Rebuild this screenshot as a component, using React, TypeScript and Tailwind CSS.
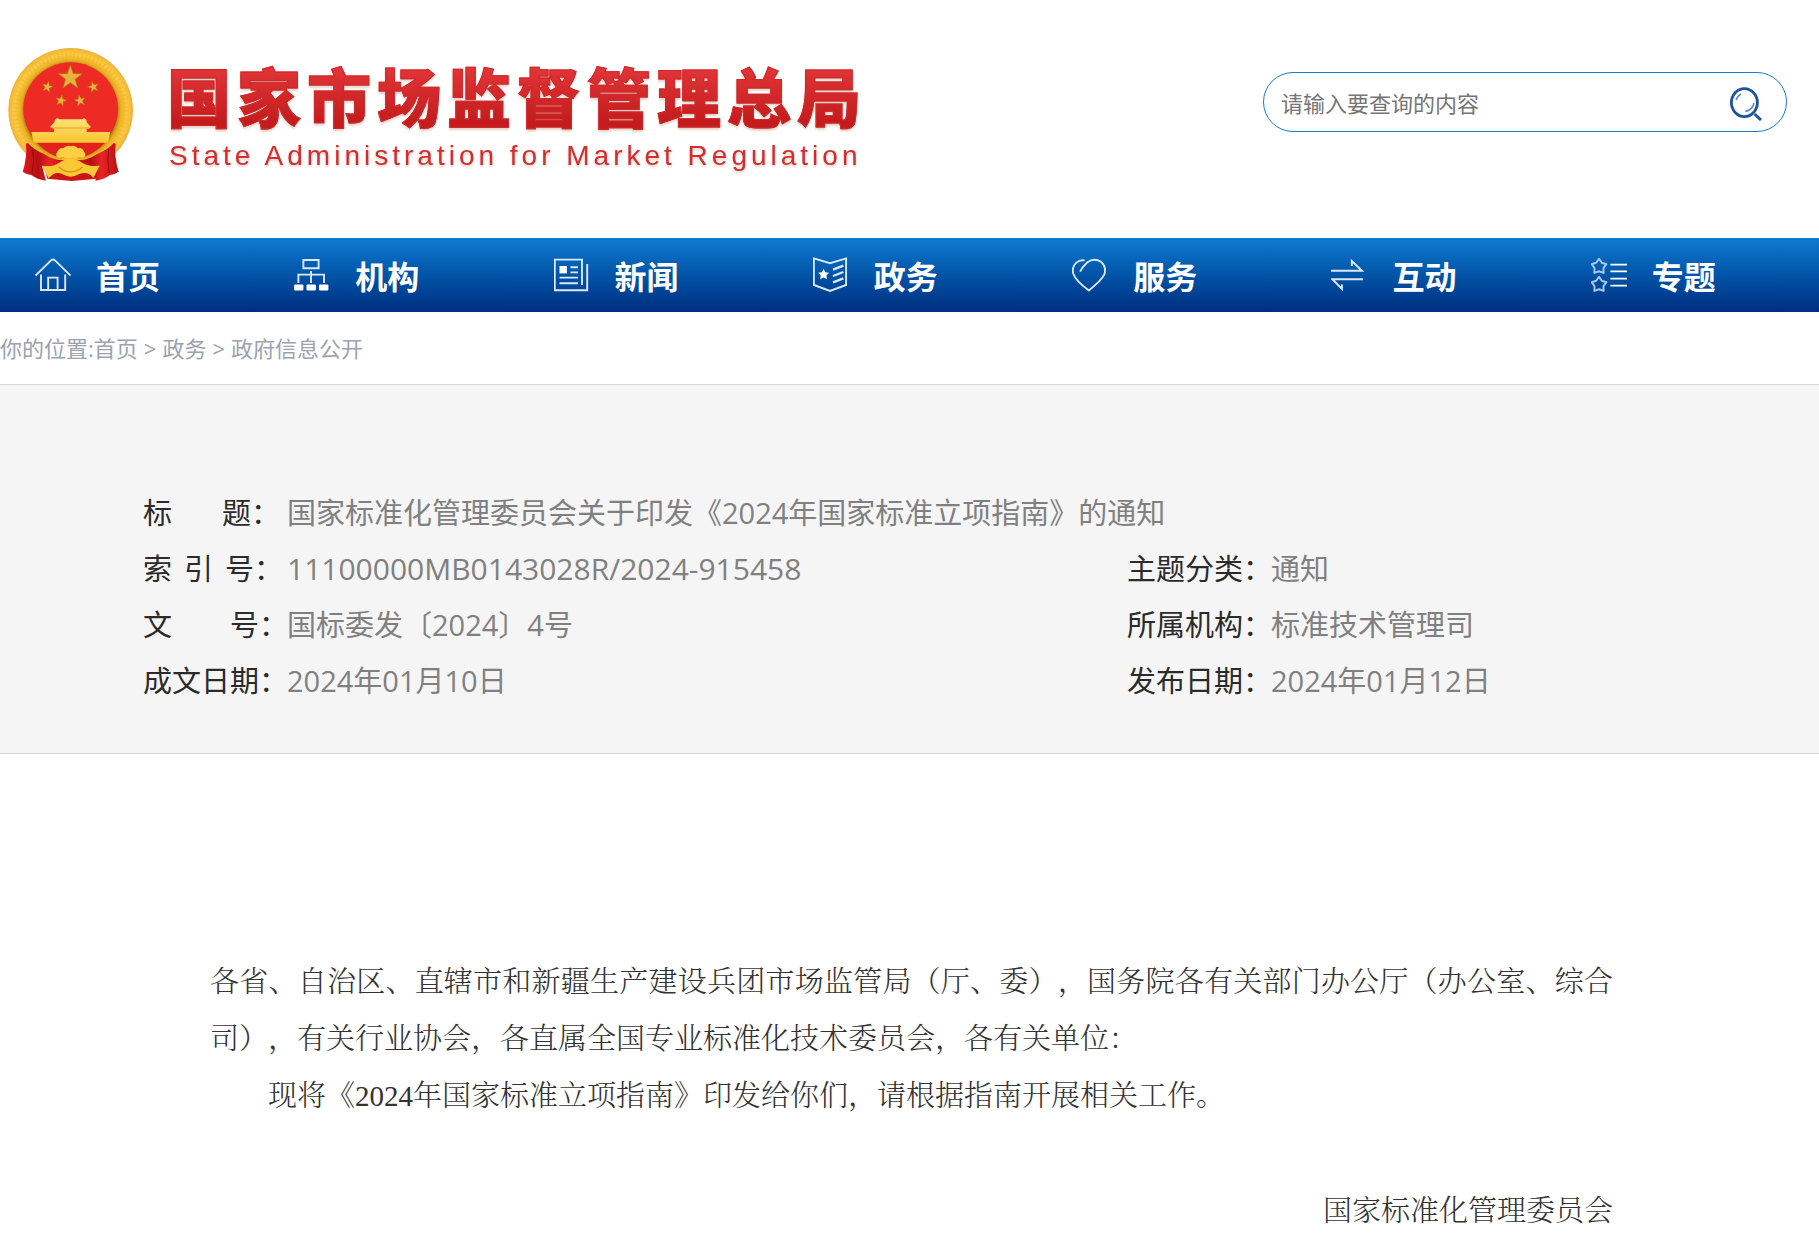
import type { ReactNode } from "react";

function star(cx: number, cy: number, r: number, turn = 0, inner = 0.4) {
  const pts: string[] = [];
  for (let i = 0; i < 10; i++) {
    const a = ((-90 + turn + i * 36) * Math.PI) / 180;
    const d = i % 2 ? r * inner : r;
    pts.push(`${(cx + d * Math.cos(a)).toFixed(1)},${(cy + d * Math.sin(a)).toFixed(1)}`);
  }
  return pts.join(" ");
}

function Emblem() {
  return (
    <svg viewBox="21 53 384 405" className="h-[135px] w-32 shrink-0" role="img" aria-label="国徽">
      <defs>
        <radialGradient id="ring" cx="0.5" cy="0.5" r="0.5">
          <stop offset="0.74" stopColor="#a9790f" />
          <stop offset="0.8" stopColor="#e9ae22" />
          <stop offset="0.9" stopColor="#fdcc40" />
          <stop offset="1" stopColor="#f0b13a" />
        </radialGradient>
        <linearGradient id="drape" x1="0" y1="0" x2="1" y2="0">
          <stop offset="0" stopColor="#e0191c" />
          <stop offset="0.35" stopColor="#b50f12" />
          <stop offset="0.6" stopColor="#ea2224" />
          <stop offset="1" stopColor="#b81114" />
        </linearGradient>
        <linearGradient id="gate" x1="0" y1="0" x2="0" y2="1">
          <stop offset="0" stopColor="#ffe27a" />
          <stop offset="1" stopColor="#fbc52e" />
        </linearGradient>
      </defs>
      <path d="M130 400 H300 L290 445 L215 452 L142 445Z" fill="#c91518" />
      <ellipse cx="212" cy="240" rx="187" ry="187" fill="url(#ring)" />
      <ellipse cx="212" cy="240" rx="166" ry="167" fill="none" stroke="#e3a521" strokeWidth="14" strokeDasharray="5 7" opacity="0.25" />
      <ellipse cx="212" cy="236" rx="142" ry="140" fill="#ee2a24" />
      <polygon points={star(211, 142, 38)} fill="#e8b33a" stroke="#a9761a" strokeWidth="2" />
      <polygon points={star(142, 170, 18, 15)} fill="#e8b33a" stroke="#b5651a" strokeWidth="1.5" />
      <polygon points={star(280, 170, 18, -15)} fill="#e8b33a" stroke="#b5651a" strokeWidth="1.5" />
      <polygon points={star(183, 211, 18, 12)} fill="#e8b33a" stroke="#b5651a" strokeWidth="1.5" />
      <polygon points={star(240, 211, 18, -12)} fill="#e8b33a" stroke="#b5651a" strokeWidth="1.5" />
      <path d="M165 268 L172 263 L178 267 H246 L252 263 L259 268 L260 276 L273 290 L266 295 H260 V305 H331 L324 337 H101 L94 305 H162 V295 L150 290 L163 276Z" fill="url(#gate)" />
      <path d="M156 293 H268" stroke="#e0a11e" strokeWidth="3" />
      <path d="M112 338 H314 Q268 386 212 386 Q156 386 112 338Z" fill="#e2211f" />
      <path d="M72 335 Q100 350 128 372 Q170 400 196 380 Q212 372 228 380 Q254 400 296 372 Q330 350 352 335 L340 372 Q300 410 250 408 Q212 390 174 408 Q124 410 84 372Z" fill="#f6bd2d" />
      <path d="M172 364 Q180 350 190 354 Q200 342 212 348 Q224 342 234 354 Q246 350 252 364 Q262 374 250 382 H174 Q164 374 172 364Z" fill="#ffcf42" />
      <path d="M84 338 Q98 356 134 372 Q166 394 200 388 Q186 402 160 408 L126 406 L138 451 Q108 446 94 434 Q78 432 68 424 Q82 380 78 340Z" fill="url(#drape)" />
      <path d="M341 338 Q326 356 290 372 Q258 394 226 388 Q240 402 266 408 L298 406 L286 451 Q316 446 330 434 Q346 432 356 424 Q342 380 347 340Z" fill="url(#drape)" />
      <path d="M126 408 Q160 412 186 392 Q212 378 238 392 Q264 412 299 406 L280 443 Q264 420 236 432 Q212 446 188 432 Q166 420 146 444Z" fill="#fbc935" />
      <path d="M176 410 Q212 440 248 410" fill="none" stroke="#d39416" strokeWidth="4" />
      <path d="M98 356 Q104 392 96 428 M326 356 Q320 392 328 428" fill="none" stroke="#8f0b0e" strokeWidth="3" />
    </svg>
  );
}

function NavIcon({ children }: { children: ReactNode }) {
  return (
    <svg viewBox="0 0 36 36" className="h-9 w-9 shrink-0" fill="none" stroke="#dbe8f6" strokeWidth="1.9" aria-hidden="true">
      {children}
    </svg>
  );
}

const NAV: { label: string; icon: ReactNode }[] = [
  {
    label: "首页",
    icon: (
      <>
        <path d="M0.5 18.5 L16 3.4 Q18 1.8 20 3.4 L35.5 18.5" />
        <path d="M6 17.5 V33 H30.2 V17.5" />
        <path d="M13.2 33 V20.6 H22.6 V33" />
      </>
    ),
  },
  {
    label: "机构",
    icon: (
      <>
        <path d="M9.4 3 H24.6 V11.2 H9.4Z M17 14 V26 M4.4 26 V17.6 H30 V26" />
        <g fill="#fff" stroke="none">
          <rect x="0" y="27.5" width="9.4" height="6" rx="1" />
          <rect x="12.5" y="27.5" width="9.4" height="6" rx="1" />
          <rect x="25" y="27.5" width="9.4" height="6" rx="1" />
        </g>
      </>
    ),
  },
  {
    label: "新闻",
    icon: (
      <>
        <path d="M28 26 V2.6 H0.8 V33.2 H33.2 V7 M28 24 V28" />
        <path d="M16.5 10.2 H24 M16.5 15.4 H24 M5.5 20.6 H24 M5.5 26.2 H24" />
        <rect x="5.5" y="9" width="7.4" height="7.4" fill="#fff" stroke="none" />
      </>
    ),
  },
  {
    label: "政务",
    icon: (
      <>
        <path d="M0.9 1.4 L17 6.2 L33.1 1.4 V28 L17 34 L0.9 28Z" />
        <polygon points={star(10.6, 17.6, 5.8, 0, 0.5)} fill="#fff" stroke="none" />
        <path d="M20 12.6 L30.4 8.6 M20 19 L30.4 15 M20 25.4 L30.4 21.4" strokeWidth="2.3" />
      </>
    ),
  },
  {
    label: "服务",
    icon: <path d="M8 14.6 Q11 9 15.4 5.2 Q22 0.6 29 4.8 Q34.6 9.6 32.4 17.4 Q29 24 16.8 33.4 Q3.6 23.6 1.4 17 Q-0.6 10 4.4 5.6 Q7.8 2.6 12.6 3.4" />,
  },
  {
    label: "互动",
    icon: <path d="M0 13.8 H31 L20.8 4 V9 M32 22.2 H1.4 L11 32 V27.4" />,
  },
  {
    label: "专题",
    icon: (
      <>
        <g strokeWidth="2" stroke="#a9c6e6" strokeLinejoin="round">
          <polygon points={star(8, 9.6, 7.8, 0, 0.6)} />
          <polygon points={star(8, 27.6, 7.8, 0, 0.6)} />
        </g>
        <path d="M19.4 7.6 H36 M19.4 14.4 H36 M19.4 21.6 H36 M19.4 28.6 H36" stroke="#fff" />
      </>
    ),
  },
];

function Field({ parts, gap = "", children }: { parts: string[]; gap?: string; children: ReactNode }) {
  return (
    <div className="flex whitespace-nowrap">
      <dt className={`flex w-36 shrink-0 text-[#2b2b2b] ${gap}`}>
        {parts.map((p) => (
          <span key={p}>{p}</span>
        ))}
      </dt>
      <dd>{children}</dd>
    </div>
  );
}

export default function App() {
  return (
    <div className="overflow-x-hidden bg-white font-['Open_Sans','Noto_Sans_CJK_SC',sans-serif] [text-spacing-trim:space-all]">
      <header className="flex items-start justify-between pt-12 pr-8 pb-[55px] pl-[7px]">
        <a href="#home" className="flex">
          <Emblem />
          <span className="ml-8 flex flex-col whitespace-nowrap drop-shadow-[0_2px_1px_rgba(170,120,80,0.35)]">
            <span className="mt-1.5 bg-linear-to-b from-[#e23538] from-15% to-[#c41b1d] to-85% bg-clip-text font-['Noto_Sans_CJK_SC',sans-serif] text-[64px] leading-[80px] font-black tracking-[6px] text-transparent [-webkit-text-stroke:1px_#d0282a]">
              国家市场监督管理总局
            </span>
            <span className="mt-1.5 ml-0.5 font-['Liberation_Sans',sans-serif] text-[28px] leading-8 tracking-[4px] text-[#d62c2e]">
              State Administration for Market Regulation
            </span>
          </span>
        </a>
        <form className="mt-6 flex h-[60px] w-[524px] items-center rounded-full border border-[#1a7bcb] pt-0.5 pr-6 pl-[17px]" onSubmit={(e) => e.preventDefault()}>
          <input
            type="search"
            aria-label="搜索"
            placeholder="请输入要查询的内容"
            className="min-w-0 flex-1 bg-transparent text-[22px] leading-8 outline-none placeholder:text-[#757575]"
          />
          <button type="submit" aria-label="搜索" className="mt-0.5">
            <svg viewBox="0 0 32 34" className="h-[34px] w-8" fill="none" stroke="#1c549e" aria-hidden="true">
              <ellipse cx="14.4" cy="15.6" rx="13" ry="14" strokeWidth="2.8" />
              <path d="M24.6 27 L31 33" strokeWidth="3" />
              <path d="M6 13 Q7.4 9 11 7 M24 16 Q22.6 23 15.4 24.4" strokeWidth="1.6" stroke="#5f8cc4" />
            </svg>
          </button>
        </form>
      </header>

      <nav className="grid h-[74px] grid-cols-7 bg-linear-to-b from-[#107bd1] to-[#012e80] pr-1 font-['Noto_Sans_CJK_SC',sans-serif]" aria-label="主导航">
        {NAV.map(({ label, icon }) => (
          <a key={label} href={`#${label}`} className="flex items-center gap-[25px] pl-[35px] text-[32px] leading-10 font-bold text-white">
            <NavIcon>{icon}</NavIcon>
            {label}
          </a>
        ))}
      </nav>

      <div className="flex h-[72px] items-center text-[22px] leading-8 whitespace-nowrap text-[#9ba3af]">
        <span>你的位置:</span>
        <a href="#home">首页</a>
        <span className="mx-1.5">&gt;</span>
        <a href="#gov">政务</a>
        <span className="mx-1.5">&gt;</span>
        <a href="#open">政府信息公开</a>
      </div>

      <section className="border-t border-b border-t-[#cfd9e6] border-b-[#d4d4d4] bg-[#f5f5f5] px-[143px] pt-[100px] pb-11 text-[29px] leading-[56px] text-[#808080]">
        <dl className="grid grid-cols-[984px_1fr]">
          <div className="col-span-2">
            <Field parts={["标", "题："]} gap="gap-[50px]">
              国家标准化管理委员会关于印发《2024年国家标准立项指南》的通知
            </Field>
          </div>
          <Field parts={["索", "引", "号："]} gap="gap-3">
            <span className="text-[30px]">11100000MB0143028R/2024-915458</span>
          </Field>
          <Field parts={["主题分类："]}>通知</Field>
          <Field parts={["文", "号："]} gap="gap-[58px]">
            国标委发〔2024〕4号
          </Field>
          <Field parts={["所属机构："]}>标准技术管理司</Field>
          <Field parts={["成文日期："]}>2024年01月10日</Field>
          <Field parts={["发布日期："]}>2024年01月12日</Field>
        </dl>
      </section>

      <article className="pt-[200px] pr-[206px] pl-[210px] font-['Liberation_Serif','Noto_Serif_CJK_SC','Noto_Sans_CJK_SC',serif] text-[29px] leading-[57px] font-light text-[#333]">
        <p className="text-justify">
          各省、自治区、直辖市和新疆生产建设兵团市场监管局（厅、委），国务院各有关部门办公厅（办公室、综合司），有关行业协会，各直属全国专业标准化技术委员会，各有关单位：
        </p>
        <p className="indent-[2em]">现将《2024年国家标准立项指南》印发给你们，请根据指南开展相关工作。</p>
        <p className="mt-[62px] text-right leading-[48px]">国家标准化管理委员会</p>
      </article>
    </div>
  );
}
